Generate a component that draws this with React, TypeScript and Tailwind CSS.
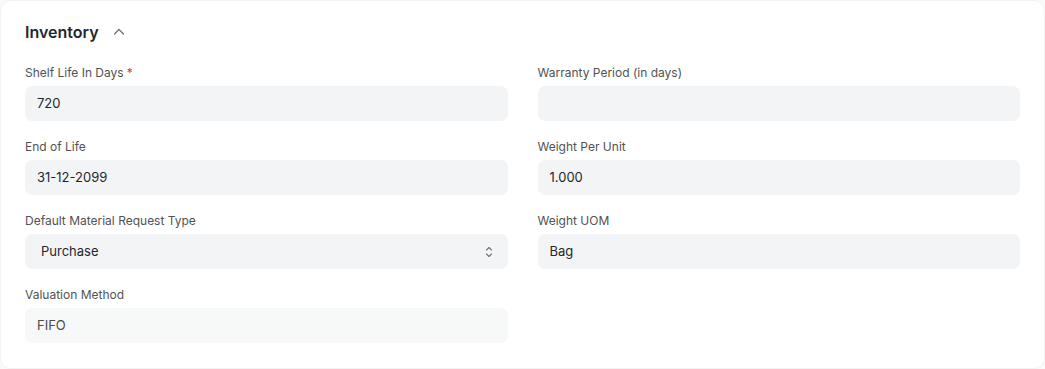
import React from "react";

function Field({
  label,
  value,
  required,
  select,
  readOnly,
}: {
  label: string;
  value?: string;
  required?: boolean;
  select?: boolean;
  readOnly?: boolean;
}) {
  return (
    <div className="flex flex-col">
      <div className="text-[12px] leading-[16px] text-[#525252] h-[16px]">
        {label}
        {required && <span className="text-[#e03636] ml-[3px]">*</span>}
      </div>
      <div
        className={`mt-[5px] h-[35px] rounded-[7px] flex items-center justify-between text-[13px] ${
          readOnly ? "bg-[#f7f8f8] text-[#4a4a4a] pl-[12px]" : "bg-[#f3f4f5] text-[#1f272e]"
        } ${select ? "pl-[16px] pr-[15px]" : readOnly ? "" : "pl-[12px]"}`}
      >
        <span className="pt-[1px]">{value}</span>
        {select && (
          <svg width="8" height="12" viewBox="0 0 8 12" fill="none" stroke="#6b7280" strokeWidth="1.1" strokeLinecap="round" strokeLinejoin="round">
            <path d="M1.5 4 L4 1.5 L6.5 4" />
            <path d="M1.5 8 L4 10.5 L6.5 8" />
          </svg>
        )}
      </div>
    </div>
  );
}

export default function App() {
  return (
    <div
      className="w-[1045px] h-[369px] bg-[#fafafa]"
      style={{ fontFamily: "Inter, 'Noto Sans', sans-serif" }}
    >
      <div className="h-full bg-white rounded-[10px] border border-[#f3f3f3] px-[24px] pt-[19px]">
        <div className="flex items-center h-[24px]">
          <span className="text-[16px] font-semibold text-[#1f272e]">Inventory</span>
          <svg className="ml-[13px]" width="14" height="14" viewBox="0 0 14 14" fill="none" stroke="#6b6b6b" strokeWidth="1.2" strokeLinecap="round" strokeLinejoin="round">
            <path d="M2.5 9 L7 4.5 L11.5 9" />
          </svg>
        </div>
        <div className="grid grid-cols-2 gap-x-[30px] gap-y-[18px] mt-[21px]">
          <Field label="Shelf Life In Days" value="720" required />
          <Field label="Warranty Period (in days)" />
          <Field label="End of Life" value="31-12-2099" />
          <Field label="Weight Per Unit" value="1.000" />
          <Field label="Default Material Request Type" value="Purchase" select />
          <Field label="Weight UOM" value="Bag" />
          <Field label="Valuation Method" value="FIFO" readOnly />
        </div>
      </div>
    </div>
  );
}
